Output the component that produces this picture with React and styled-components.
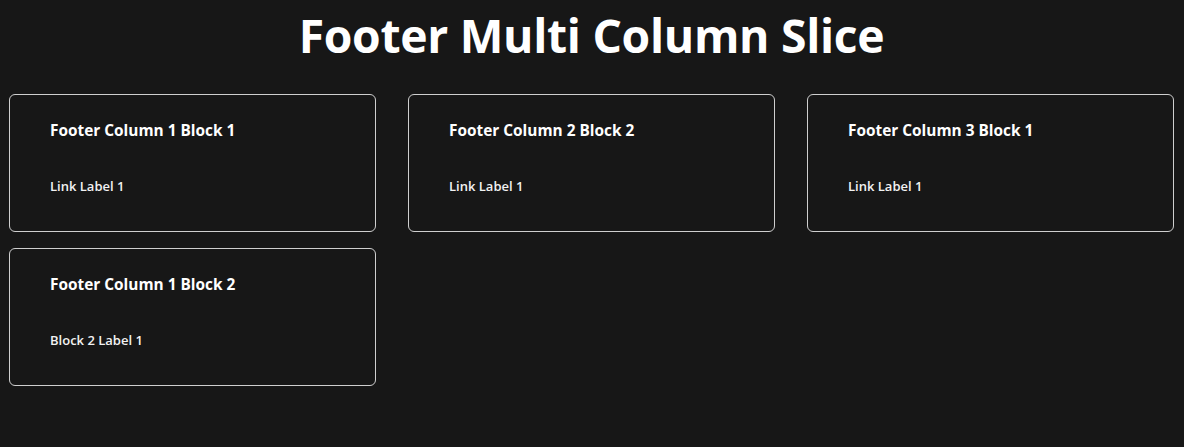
import styled, { createGlobalStyle } from "styled-components";

const GlobalStyle = createGlobalStyle`
  html, body {
    margin: 0;
    padding: 0;
    background: #171717;
  }
  body {
    font-family: "Open Sans", "Noto Sans", sans-serif;
    color: #ffffff;
  }
`;

const Page = styled.div`
  min-height: 447px;
  padding: 0 10px 0 9px;
  box-sizing: border-box;
`;

const Title = styled.h1`
  margin: 0;
  padding-top: 4px;
  text-align: center;
  font-size: 46.3px;
  font-weight: 700;
  line-height: 64px;
  letter-spacing: -0.3px;
`;

const Columns = styled.div`
  display: flex;
  gap: 32px;
  margin-top: 26px;
`;

const Column = styled.div`
  display: flex;
  flex-direction: column;
  gap: 16px;
  width: 367px;
`;

const Block = styled.div`
  border: 1px solid #cfcfcf;
  border-radius: 6px;
  height: 138px;
  box-sizing: border-box;
  padding: 25px 40px 0;
`;

const BlockTitle = styled.h3`
  margin: 0;
  font-size: 15.4px;
  font-weight: 700;
  line-height: 22px;
`;

const LinkList = styled.ul`
  list-style: none;
  margin: 35px 0 0;
  padding: 0;
`;

const LinkItem = styled.li`
  font-size: 13px;
  font-weight: 600;
  line-height: 18px;
  color: #f2f2f2;
`;

const columns = [
  [
    { title: "Footer Column 1 Block 1", links: ["Link Label 1"] },
    { title: "Footer Column 1 Block 2", links: ["Block 2 Label 1"] },
  ],
  [{ title: "Footer Column 2 Block 2", links: ["Link Label 1"] }],
  [{ title: "Footer Column 3 Block 1", links: ["Link Label 1"] }],
];

export default function App() {
  return (
    <Page>
      <GlobalStyle />
      <Title>Footer Multi Column Slice</Title>
      <Columns>
        {columns.map((blocks, i) => (
          <Column key={i}>
            {blocks.map((b) => (
              <Block key={b.title}>
                <BlockTitle>{b.title}</BlockTitle>
                <LinkList>
                  {b.links.map((l) => (
                    <LinkItem key={l}>{l}</LinkItem>
                  ))}
                </LinkList>
              </Block>
            ))}
          </Column>
        ))}
      </Columns>
    </Page>
  );
}
